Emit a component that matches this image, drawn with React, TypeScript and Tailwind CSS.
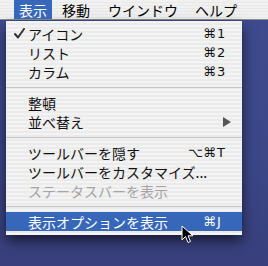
const jp = "font-['Lucida_Grande','Noto_Sans_CJK_JP',sans-serif]";

type Item =
  | { kind: "sep" }
  | {
      kind: "item";
      label: string;
      mods?: string;
      keyChar?: string;
      checked?: boolean;
      disabled?: boolean;
      submenu?: boolean;
      active?: boolean;
    };

const items: Item[] = [
  { kind: "item", label: "アイコン", mods: "⌘", keyChar: "1", checked: true },
  { kind: "item", label: "リスト", mods: "⌘", keyChar: "2" },
  { kind: "item", label: "カラム", mods: "⌘", keyChar: "3" },
  { kind: "sep" },
  { kind: "item", label: "整頓" },
  { kind: "item", label: "並べ替え", submenu: true },
  { kind: "sep" },
  { kind: "item", label: "ツールバーを隠す", mods: "⌥⌘", keyChar: "T" },
  { kind: "item", label: "ツールバーをカスタマイズ..." },
  { kind: "item", label: "ステータスバーを表示", disabled: true },
  { kind: "sep" },
  { kind: "item", label: "表示オプションを表示", mods: "⌘", keyChar: "J", active: true },
];

function Check() {
  return (
    <svg width="11" height="11" viewBox="0 0 11 11" className="absolute left-[8px] top-[4px]">
      <path d="M1 6 L4 9.5 L10 1" fill="none" stroke="#333" strokeWidth="2" strokeLinecap="round" strokeLinejoin="round" />
    </svg>
  );
}

function Cursor() {
  return (
    <svg width="14" height="20" viewBox="0 0 14 20" className="absolute left-[181px] top-[225px]">
      <path d="M1 1 L1 15 L4.5 11.5 L7 17.5 L9.5 16.5 L7 10.8 L12 10.8 Z" fill="#000" stroke="#fff" strokeWidth="1" strokeLinejoin="round" />
    </svg>
  );
}

export default function App() {
  return (
    <div className="relative w-[268px] h-[266px] overflow-hidden bg-[linear-gradient(180deg,#3f4b8e_0%,#3b4787_60%,#383f7c_100%)]">
      <div className={`flex h-5 items-stretch border-b border-[#8c8c8c] bg-[repeating-linear-gradient(180deg,#f1f1f1_0px,#f1f1f1_2px,#e9e9e9_2px,#e9e9e9_3px)] text-[14px] text-black ${jp}`}>
        <div className="ml-[14px] flex w-[38px] items-center justify-center bg-[#3767b8] text-white leading-none">表示</div>
        <div className="ml-[10px] flex items-center leading-none">移動</div>
        <div className="ml-[18px] flex items-center leading-none">ウインドウ</div>
        <div className="ml-[17px] flex items-center leading-none">ヘルプ</div>
      </div>

      <div className={`ml-[6px] mt-px w-[236px] pt-[3px] pb-[4px] bg-[repeating-linear-gradient(180deg,#f3f3f3_0px,#f3f3f3_2px,#ebebeb_2px,#ebebeb_4px)] shadow-[0_6px_12px_rgba(0,0,0,0.6)] text-[14px] ${jp}`}>
        {items.map((it, i) =>
          it.kind === "sep" ? (
            <div key={i} className="flex h-[12px] items-center">
              <div className="h-px w-full bg-[#c6c6c6]" />
            </div>
          ) : (
            <div
              key={i}
              className={`relative flex h-[19px] items-center pl-[22px] pr-[15px] leading-none ${
                it.active ? "bg-[#3767b8] text-white" : it.disabled ? "text-[#a4a4a4]" : "text-[#111]"
              }`}
            >
              {it.checked && <Check />}
              <span className="flex-1 whitespace-nowrap">{it.label}</span>
              {it.keyChar && (
                <span className="flex items-center font-['DejaVu_Sans',sans-serif] text-[13px]">
                  <span className="text-right">{it.mods}</span>
                  <span className="w-[11px] pl-[1px]">{it.keyChar}</span>
                </span>
              )}
              {it.submenu && (
                <svg width="8" height="10" viewBox="0 0 8 10" className="mr-[-4px]">
                  <path d="M0 0 L8 5 L0 10 Z" fill="#555" />
                </svg>
              )}
            </div>
          )
        )}
      </div>
      <Cursor />
    </div>
  );
}
